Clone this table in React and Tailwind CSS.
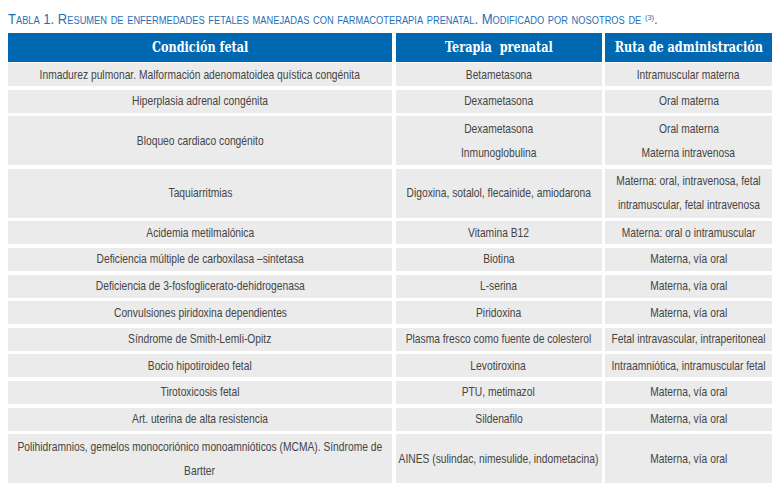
import React from "react";

const rows = [
  { a: ["Inmadurez pulmonar. Malformación adenomatoidea quística congénita"], b: ["Betametasona"], c: ["Intramuscular materna"], d: false },
  { a: ["Hiperplasia adrenal congénita"], b: ["Dexametasona"], c: ["Oral materna"], d: false },
  { a: ["Bloqueo cardiaco congénito"], b: ["Dexametasona", "Inmunoglobulina"], c: ["Oral materna", "Materna intravenosa"], d: true },
  { a: ["Taquiarritmias"], b: ["Digoxina, sotalol, flecainide, amiodarona"], c: ["Materna: oral, intravenosa, fetal", "intramuscular, fetal intravenosa"], d: true },
  { a: ["Acidemia metilmalónica"], b: ["Vitamina B12"], c: ["Materna: oral o intramuscular"], d: false },
  { a: ["Deficiencia múltiple de carboxilasa –sintetasa"], b: ["Biotina"], c: ["Materna, vía oral"], d: false },
  { a: ["Deficiencia de 3-fosfoglicerato-dehidrogenasa"], b: ["L-serina"], c: ["Materna, vía oral"], d: false },
  { a: ["Convulsiones piridoxina dependientes"], b: ["Piridoxina"], c: ["Materna, vía oral"], d: false },
  { a: ["Síndrome de Smith-Lemli-Opitz"], b: ["Plasma fresco como fuente de colesterol"], c: ["Fetal intravascular, intraperitoneal"], d: false },
  { a: ["Bocio hipotiroideo fetal"], b: ["Levotiroxina"], c: ["Intraamniótica, intramuscular fetal"], d: false },
  { a: ["Tirotoxicosis fetal"], b: ["PTU, metimazol"], c: ["Materna, vía oral"], d: false },
  { a: ["Art. uterina de alta resistencia"], b: ["Sildenafilo"], c: ["Materna, vía oral"], d: false },
  { a: ["Polihidramnios, gemelos monocoriónico monoamnióticos (MCMA). Síndrome de", "Bartter"], b: ["AINES (sulindac, nimesulide, indometacina)"], c: ["Materna, vía oral"], d: true },
];

function Cell({ lines, dbl }) {
  return (
    <div className={`bg-[#ebebeb] flex flex-col items-center justify-center text-center overflow-visible ${dbl ? "h-[49px]" : "h-[23px]"}`}>
      {lines.map((l, i) => (
        <div key={i} className="leading-[24px] h-[24px] w-full flex justify-center">
          <span className="inline-block whitespace-nowrap scale-x-[0.79]">{l}</span>
        </div>
      ))}
    </div>
  );
}

function Head({ children }) {
  return (
    <div className="bg-[#0067b1] h-[29px] flex items-center justify-center text-white font-bold text-[15px] font-[family-name:'DejaVu_Serif',serif]">
      <span className="inline-block whitespace-pre scale-x-[0.75]">{children}</span>
    </div>
  );
}

export default function App() {
  return (
    <div className="w-[779px] h-[493px] bg-white overflow-hidden font-[family-name:'Liberation_Sans',sans-serif]">
      <div className="pl-[8px] pt-[11px] h-[33px] text-[#1f6fb8] text-[14px] leading-[16px] whitespace-nowrap [font-variant:small-caps]">
        <span className="inline-block origin-left scale-x-[0.93]">
          Tabla 1. Resumen de enfermedades fetales manejadas con farmacoterapia prenatal. Modificado por nosotros de <sup className="text-[8px]">(3)</sup>.
        </span>
      </div>
      <div className="ml-[8px] grid grid-cols-[384px_206px_167px] gap-x-[3.5px]">
        <Head>Condición fetal</Head>
        <Head>Terapia  prenatal</Head>
        <Head>Ruta de administración</Head>
      </div>
      <div className="ml-[8px] mt-[1px] grid grid-cols-[384px_206px_167px] gap-x-[3.5px] gap-y-[3.6px] text-[#454545] text-[13px]">
        {rows.map((r, i) => (
          <React.Fragment key={i}>
            <Cell lines={r.a} dbl={r.d} />
            <Cell lines={r.b} dbl={r.d} />
            <Cell lines={r.c} dbl={r.d} />
          </React.Fragment>
        ))}
      </div>
    </div>
  );
}
